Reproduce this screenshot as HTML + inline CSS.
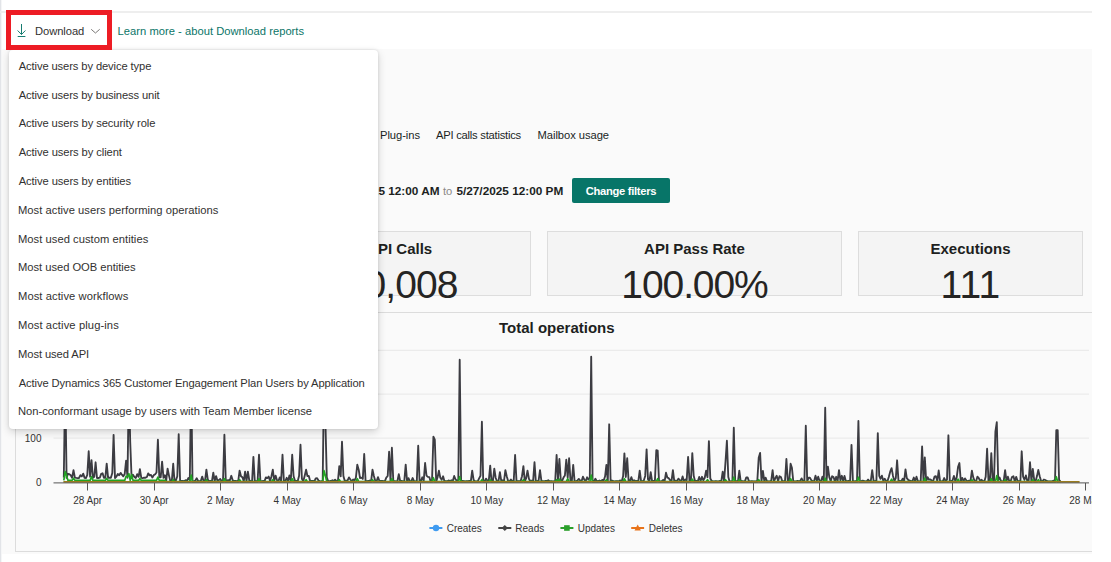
<!DOCTYPE html>
<html lang="en"><head><meta charset="utf-8"><title>Download reports</title>
<style>
html,body{margin:0;padding:0;background:#fff}
body{width:1111px;height:562px;overflow:hidden;position:relative;font-family:"Liberation Sans",sans-serif;font-size:11.2px;color:#323130}
#wrap{position:absolute;left:0;top:0;width:1092px;height:562px;overflow:hidden}
.abs{position:absolute;white-space:nowrap}
#edge{left:0;top:0;width:1px;height:562px;background:#e2e4e8;border-right:1px solid #f5f6f7}
#topline{left:0;top:11px;width:1092px;height:2px;background:#eeeeee}
#bar{left:2px;top:13px;width:1090px;height:36px;background:#fff}
#gray{left:2px;top:49px;width:1090px;height:505px;background:#fafafa}
#red{left:6px;top:10px;width:96px;height:30px;border:5px solid #ed1c24}
#dl{left:35px;top:24px;line-height:14px;letter-spacing:-0.07px;color:#323130}
#lm{left:117.6px;top:24px;line-height:14px;letter-spacing:0.016px;color:#0b7568;text-decoration:none}
.tab{top:128px;line-height:14px;color:#201f1e}
.flt{top:184px;line-height:14px;color:#201f1e}
#btn{left:572px;top:178px;width:98px;height:25px;border-radius:2px;background:#077568;color:#fff;font-weight:700;font-size:11.2px;letter-spacing:-0.3px;text-align:center;line-height:27px}
.card{top:231px;height:63px;background:#f4f4f4;border:1px solid #dddddd;text-align:center}
.card h3{margin:0;font-size:15px;font-weight:700;color:#201f1e;position:absolute;left:0;right:0;top:8px;line-height:18px}
.card p{margin:0;font-size:39px;color:#252423;position:absolute;left:0;right:0;top:30px;line-height:46px}
#chart{left:15px;top:312px;width:1100px;height:238px;border:1px solid #dcdcdc;background:#fafafa}
#ttl{left:499px;top:319px;font-size:15px;font-weight:700;line-height:18px;color:#201f1e}
#menu{left:9px;top:50px;width:369px;height:378.5px;background:#fff;border-radius:4px;box-shadow:0 3px 8px rgba(0,0,0,.16),0 0 3px rgba(0,0,0,.12);margin:0;padding:0;list-style:none}
#menu ul{margin:0;padding:0;list-style:none}
#menu li{position:absolute;left:0;height:29px;line-height:29px;color:#323130;white-space:nowrap}
svg text{font-family:"Liberation Sans",sans-serif;font-size:10px;fill:#333}
</style></head><body>
<div id="wrap">
<div class="abs" id="edge"></div>
<div class="abs" id="topline"></div>
<div class="abs" id="bar"></div>
<div class="abs" id="gray"></div>

<span class="abs tab" style="left:30px">Home</span>
<span class="abs tab" style="left:80px">Active usage</span>
<span class="abs tab" style="left:165px">System jobs</span>
<span class="abs tab" style="left:380px;letter-spacing:-0.05px">Plug-ins</span>
<span class="abs tab" style="left:436px;letter-spacing:-0.227px">API calls statistics</span>
<span class="abs tab" style="left:537.5px;letter-spacing:-0.05px">Mailbox usage</span>

<span class="abs flt" style="right:652.4px;font-weight:700;font-size:11.8px">Filters: 4/27/2025 12:00 AM</span>
<span class="abs flt" style="left:443px;color:#8a8886;letter-spacing:-0.17px">to</span>
<span class="abs flt" style="left:456.4px;font-weight:700;font-size:11.8px">5/27/2025 12:00 PM</span>
<div class="abs" id="btn">Change filters</div>

<div class="abs card" style="left:265px;width:264px"><h3 style="padding-left:3.4px">API Calls</h3><p style="letter-spacing:-0.9px;padding-left:5.2px">10,008</p></div>
<div class="abs card" style="left:547px;width:293px"><h3>API Pass Rate</h3><p style="letter-spacing:-1.1px">100.00%</p></div>
<div class="abs card" style="left:858px;width:223px"><h3>Executions</h3><p style="letter-spacing:0.2px">111</p></div>

<div class="abs" id="chart"></div>
<div class="abs" id="ttl">Total operations</div>
<svg class="abs" style="left:0;top:0" width="1092" height="562" viewBox="0 0 1092 562">
<g stroke="#ebebeb" stroke-width="1.2" fill="none">
<line x1="53.5" y1="350.4" x2="1089" y2="350.4"/><line x1="53.5" y1="394.2" x2="1089" y2="394.2"/><line x1="53.5" y1="438.1" x2="1089" y2="438.1"/>
</g>
<path d="M63.8,477.4 L65.2,381.7 L66.6,477.9 L68.0,473.8 L69.3,474.1 L70.7,475.3 L72.1,477.7 L73.5,470.2 L74.9,477.6 L76.3,477.9 L77.6,478.1 L79.0,478.0 L80.4,475.2 L81.8,476.4 L83.2,473.6 L84.6,477.9 L85.9,478.1 L87.3,474.9 L88.7,451.2 L90.1,476.7 L91.5,460.1 L92.9,477.8 L94.3,476.7 L95.6,462.3 L97.0,478.0 L98.4,478.0 L99.8,477.7 L101.2,473.9 L102.6,473.3 L103.9,477.8 L105.3,477.9 L106.7,463.7 L108.1,477.9 L109.5,477.6 L110.9,477.8 L112.3,473.1 L113.6,434.9 L115.0,478.0 L116.4,476.6 L117.8,474.0 L119.2,475.2 L120.6,472.9 L121.9,474.7 L123.3,476.3 L124.7,474.0 L126.1,460.7 L127.5,477.7 L128.9,381.7 L130.2,441.7 L131.6,478.0 L133.0,474.8 L134.4,476.9 L135.8,478.0 L137.2,474.1 L138.6,476.8 L139.9,469.2 L141.3,477.8 L142.7,478.1 L144.1,477.7 L145.5,477.7 L146.9,477.0 L148.2,473.4 L149.6,475.4 L151.0,475.0 L152.4,477.5 L153.8,475.1 L155.2,474.3 L156.5,472.5 L157.9,439.7 L159.3,477.1 L160.7,477.4 L162.1,461.7 L163.5,477.9 L164.9,475.2 L166.2,480.6 L167.6,468.7 L169.0,475.6 L170.4,481.4 L171.8,481.4 L173.2,463.7 L174.5,481.1 L175.9,480.4 L177.3,476.2 L178.7,434.2 L180.1,480.6 L181.5,481.0 L182.8,481.0 L184.2,481.1 L185.6,480.2 L187.0,480.9 L188.4,478.0 L189.8,479.9 L191.2,381.7 L192.5,481.0 L193.9,481.3 L195.3,480.6 L196.7,478.2 L198.1,481.0 L199.5,481.2 L200.8,481.1 L202.2,476.6 L203.6,481.1 L205.0,481.2 L206.4,469.7 L207.8,479.7 L209.2,481.3 L210.5,481.0 L211.9,481.4 L213.3,472.7 L214.7,481.0 L216.1,476.1 L217.5,481.1 L218.8,480.1 L220.2,478.9 L221.6,481.1 L223.0,481.0 L224.4,434.7 L225.8,481.3 L227.1,480.5 L228.5,480.1 L229.9,480.3 L231.3,475.8 L232.7,480.3 L234.1,481.0 L235.5,481.0 L236.8,481.2 L238.2,481.4 L239.6,470.7 L241.0,476.2 L242.4,477.3 L243.8,481.2 L245.1,471.7 L246.5,481.1 L247.9,471.7 L249.3,480.5 L250.7,481.2 L252.1,481.1 L253.4,456.9 L254.8,481.2 L256.2,481.1 L257.6,481.2 L259.0,454.7 L260.4,481.0 L261.8,481.3 L263.1,481.0 L264.5,481.4 L265.9,477.4 L267.3,478.1 L268.7,476.6 L270.1,481.0 L271.4,476.4 L272.8,469.7 L274.2,481.0 L275.6,475.6 L277.0,480.2 L278.4,481.0 L279.8,477.4 L281.1,481.3 L282.5,454.7 L283.9,481.4 L285.3,481.2 L286.7,477.8 L288.1,481.2 L289.4,475.5 L290.8,481.0 L292.2,454.7 L293.6,476.2 L295.0,480.8 L296.4,481.0 L297.7,481.3 L299.1,475.7 L300.5,444.7 L301.9,478.7 L303.3,481.2 L304.7,475.7 L306.1,469.7 L307.4,476.0 L308.8,475.9 L310.2,481.3 L311.6,481.0 L313.0,480.8 L314.4,481.3 L315.7,478.4 L317.1,478.2 L318.5,480.5 L319.9,481.3 L321.3,481.4 L322.7,480.9 L324.0,381.7 L325.4,421.7 L326.8,477.3 L328.2,481.4 L329.6,481.2 L331.0,481.0 L332.4,480.2 L333.7,481.0 L335.1,479.7 L336.5,481.1 L337.9,481.3 L339.3,466.2 L340.7,476.4 L342.0,441.7 L343.4,476.0 L344.8,481.1 L346.2,480.6 L347.6,480.3 L349.0,477.4 L350.4,479.5 L351.7,481.2 L353.1,479.5 L354.5,480.4 L355.9,477.6 L357.3,464.7 L358.7,469.7 L360.0,478.0 L361.4,477.6 L362.8,478.9 L364.2,454.0 L365.6,481.2 L367.0,481.1 L368.3,481.0 L369.7,480.5 L371.1,481.4 L372.5,469.7 L373.9,476.0 L375.3,481.1 L376.7,481.0 L378.0,477.1 L379.4,481.0 L380.8,481.0 L382.2,481.0 L383.6,481.1 L385.0,480.9 L386.3,477.7 L387.7,476.0 L389.1,451.7 L390.5,481.1 L391.9,447.7 L393.3,481.1 L394.6,481.2 L396.0,481.4 L397.4,481.3 L398.8,474.2 L400.2,481.3 L401.6,481.0 L403.0,481.3 L404.3,481.1 L405.7,464.7 L407.1,481.4 L408.5,478.1 L409.9,481.3 L411.3,481.4 L412.6,478.0 L414.0,481.1 L415.4,481.3 L416.8,481.2 L418.2,445.7 L419.6,481.4 L420.9,481.0 L422.3,477.3 L423.7,481.0 L425.1,463.0 L426.5,475.6 L427.9,476.9 L429.3,477.1 L430.6,481.4 L432.0,481.2 L433.4,436.7 L434.8,439.7 L436.2,481.4 L437.6,477.2 L438.9,470.7 L440.3,477.7 L441.7,479.7 L443.1,476.3 L444.5,481.4 L445.9,481.1 L447.3,481.3 L448.6,480.4 L450.0,481.2 L451.4,480.3 L452.8,480.9 L454.2,476.0 L455.6,479.5 L456.9,480.6 L458.3,481.4 L459.7,359.7 L461.1,481.0 L462.5,481.0 L463.9,481.2 L465.2,481.4 L466.6,481.2 L468.0,481.1 L469.4,480.9 L470.8,481.4 L472.2,470.7 L473.6,479.8 L474.9,481.3 L476.3,481.3 L477.7,481.3 L479.1,478.4 L480.5,475.8 L481.9,421.7 L483.2,481.0 L484.6,481.4 L486.0,478.6 L487.4,480.8 L488.8,480.6 L490.2,465.7 L491.5,481.2 L492.9,481.2 L494.3,468.7 L495.7,478.0 L497.1,481.4 L498.5,481.1 L499.9,472.1 L501.2,480.6 L502.6,480.3 L504.0,481.0 L505.4,470.2 L506.8,476.5 L508.2,481.2 L509.5,481.4 L510.9,479.6 L512.3,481.0 L513.7,481.3 L515.1,455.0 L516.5,481.1 L517.9,481.1 L519.2,481.1 L520.6,481.2 L522.0,476.2 L523.4,466.2 L524.8,481.3 L526.2,478.1 L527.5,470.7 L528.9,478.7 L530.3,481.2 L531.7,480.6 L533.1,481.4 L534.5,462.2 L535.8,481.1 L537.2,481.2 L538.6,480.6 L540.0,470.2 L541.4,480.9 L542.8,481.1 L544.2,481.3 L545.5,481.0 L546.9,480.9 L548.3,480.3 L549.7,481.4 L551.1,481.1 L552.5,481.3 L553.8,481.3 L555.2,481.3 L556.6,455.0 L558.0,479.5 L559.4,459.0 L560.8,480.3 L562.1,481.0 L563.5,477.6 L564.9,475.5 L566.3,459.7 L567.7,477.6 L569.1,458.2 L570.5,481.0 L571.8,481.3 L573.2,464.9 L574.6,481.4 L576.0,481.3 L577.4,480.5 L578.8,478.9 L580.1,480.4 L581.5,481.4 L582.9,476.7 L584.3,479.7 L585.7,481.2 L587.1,477.3 L588.4,479.6 L589.8,477.7 L591.2,356.7 L592.6,481.0 L594.0,481.4 L595.4,478.7 L596.8,481.3 L598.1,481.0 L599.5,480.5 L600.9,481.1 L602.3,479.9 L603.7,480.5 L605.1,476.3 L606.4,464.9 L607.8,481.4 L609.2,424.3 L610.6,481.0 L612.0,480.6 L613.4,481.2 L614.8,481.4 L616.1,481.1 L617.5,481.1 L618.9,481.3 L620.3,480.4 L621.7,481.4 L623.1,476.3 L624.4,453.4 L625.8,477.0 L627.2,458.2 L628.6,481.0 L630.0,480.8 L631.4,477.2 L632.7,481.2 L634.1,480.3 L635.5,481.1 L636.9,481.0 L638.3,481.4 L639.7,470.7 L641.1,481.3 L642.4,481.4 L643.8,480.6 L645.2,475.9 L646.6,449.4 L648.0,479.5 L649.4,481.3 L650.7,472.1 L652.1,481.4 L653.5,481.0 L654.9,481.0 L656.3,450.2 L657.7,450.7 L659.0,481.2 L660.4,481.3 L661.8,481.2 L663.2,479.8 L664.6,481.4 L666.0,472.7 L667.4,477.7 L668.7,478.2 L670.1,480.1 L671.5,481.3 L672.9,470.2 L674.3,481.4 L675.7,480.6 L677.0,481.2 L678.4,478.6 L679.8,480.1 L681.2,481.4 L682.6,476.5 L684.0,481.3 L685.4,479.5 L686.7,480.1 L688.1,456.9 L689.5,481.0 L690.9,480.7 L692.3,453.1 L693.7,475.8 L695.0,481.0 L696.4,481.0 L697.8,481.4 L699.2,477.0 L700.6,481.0 L702.0,476.8 L703.3,480.2 L704.7,478.0 L706.1,470.7 L707.5,477.2 L708.9,441.1 L710.3,478.5 L711.7,481.0 L713.0,481.4 L714.4,481.3 L715.8,481.1 L717.2,481.4 L718.6,481.3 L720.0,481.0 L721.3,481.4 L722.7,471.7 L724.1,481.3 L725.5,461.7 L726.9,440.7 L728.3,477.0 L729.6,481.4 L731.0,481.4 L732.4,481.2 L733.8,427.7 L735.2,481.2 L736.6,481.1 L738.0,481.2 L739.3,470.7 L740.7,481.3 L742.1,481.1 L743.5,481.4 L744.9,481.4 L746.3,477.4 L747.6,477.4 L749.0,481.4 L750.4,481.4 L751.8,481.1 L753.2,481.4 L754.6,481.3 L756.0,481.4 L757.3,481.0 L758.7,457.7 L760.1,452.9 L761.5,481.0 L762.9,471.0 L764.3,481.0 L765.6,477.7 L767.0,481.4 L768.4,481.3 L769.8,481.4 L771.2,481.0 L772.6,470.2 L773.9,481.3 L775.3,478.3 L776.7,475.7 L778.1,481.0 L779.5,476.2 L780.9,477.1 L782.3,481.3 L783.6,481.2 L785.0,481.0 L786.4,459.0 L787.8,481.3 L789.2,481.3 L790.6,463.7 L791.9,467.7 L793.3,481.4 L794.7,481.4 L796.1,481.3 L797.5,481.0 L798.9,481.1 L800.2,480.9 L801.6,478.4 L803.0,481.2 L804.4,481.0 L805.8,425.7 L807.2,481.4 L808.6,477.7 L809.9,477.7 L811.3,480.1 L812.7,481.3 L814.1,481.2 L815.5,475.7 L816.9,480.7 L818.2,476.7 L819.6,481.1 L821.0,481.3 L822.4,476.7 L823.8,481.3 L825.2,407.7 L826.5,481.1 L827.9,466.7 L829.3,477.1 L830.7,481.3 L832.1,476.2 L833.5,477.0 L834.9,481.4 L836.2,476.8 L837.6,481.1 L839.0,470.2 L840.4,480.5 L841.8,475.8 L843.2,481.1 L844.5,476.0 L845.9,481.2 L847.3,481.2 L848.7,480.8 L850.1,480.9 L851.5,444.9 L852.9,481.0 L854.2,481.3 L855.6,481.2 L857.0,481.2 L858.4,420.9 L859.8,481.3 L861.2,481.4 L862.5,480.6 L863.9,481.0 L865.3,481.3 L866.7,481.3 L868.1,479.6 L869.5,481.1 L870.8,481.0 L872.2,470.2 L873.6,481.0 L875.0,481.1 L876.4,481.3 L877.8,433.1 L879.2,475.8 L880.5,478.9 L881.9,475.7 L883.3,480.7 L884.7,478.8 L886.1,481.1 L887.5,481.1 L888.8,476.9 L890.2,471.7 L891.6,468.1 L893.0,475.9 L894.4,481.0 L895.8,478.2 L897.1,460.3 L898.5,481.0 L899.9,481.0 L901.3,481.3 L902.7,478.6 L904.1,481.3 L905.5,469.4 L906.8,478.1 L908.2,479.9 L909.6,480.5 L911.0,481.2 L912.4,481.1 L913.8,477.5 L915.1,481.1 L916.5,476.7 L917.9,481.3 L919.3,481.4 L920.7,481.4 L922.1,446.5 L923.5,481.0 L924.8,457.4 L926.2,481.1 L927.6,477.2 L929.0,479.7 L930.4,479.5 L931.8,480.6 L933.1,481.2 L934.5,476.7 L935.9,476.2 L937.3,481.1 L938.7,470.5 L940.1,481.3 L941.4,481.4 L942.8,481.4 L944.2,478.0 L945.6,481.2 L947.0,479.6 L948.4,435.3 L949.8,481.1 L951.1,481.1 L952.5,480.5 L953.9,476.0 L955.3,481.1 L956.7,477.4 L958.1,466.7 L959.4,463.0 L960.8,481.3 L962.2,477.9 L963.6,481.0 L965.0,478.4 L966.4,480.5 L967.7,481.4 L969.1,480.7 L970.5,481.1 L971.9,470.7 L973.3,477.6 L974.7,481.1 L976.1,481.2 L977.4,476.7 L978.8,478.2 L980.2,480.9 L981.6,479.8 L983.0,481.2 L984.4,481.2 L985.7,476.8 L987.1,448.7 L988.5,481.2 L989.9,481.1 L991.3,453.1 L992.7,481.0 L994.0,481.1 L995.4,431.7 L996.8,422.2 L998.2,480.0 L999.6,477.5 L1001.0,481.1 L1002.4,481.3 L1003.7,481.2 L1005.1,470.2 L1006.5,481.0 L1007.9,476.7 L1009.3,481.3 L1010.7,481.0 L1012.0,477.0 L1013.4,476.2 L1014.8,481.2 L1016.2,476.9 L1017.6,481.1 L1019.0,481.1 L1020.4,481.2 L1021.7,451.3 L1023.1,476.6 L1024.5,479.8 L1025.9,475.5 L1027.3,480.9 L1028.7,480.4 L1030.0,462.2 L1031.4,481.1 L1032.8,468.9 L1034.2,479.8 L1035.6,481.2 L1037.0,476.1 L1038.3,470.0 L1039.7,476.2 L1041.1,481.1 L1042.5,481.2 L1043.9,479.5 L1045.3,480.0 L1046.7,481.0 L1048.0,481.3 L1049.4,481.4 L1050.8,481.3 L1052.2,481.3 L1053.6,480.6 L1055.0,481.4 L1056.3,430.2 L1057.7,430.2 L1059.1,480.2 L1060.5,481.1" fill="none" stroke="#3c3c42" stroke-width="1.85" stroke-linejoin="round"/>
<path d="M63.8,480.4 L65.2,471.7 L66.6,475.7 L68.0,480.4 L69.3,480.4 L70.7,480.4 L72.1,480.4 L73.5,478.2 L74.9,480.4 L76.3,480.4 L77.6,480.4 L79.0,480.4 L80.4,480.4 L81.8,480.4 L83.2,480.4 L84.6,480.4 L85.9,480.4 L87.3,480.4 L88.7,480.4 L90.1,480.4 L91.5,476.7 L92.9,480.4 L94.3,480.4 L95.6,480.4 L97.0,480.4 L98.4,480.4 L99.8,480.4 L101.2,480.4 L102.6,480.4 L103.9,480.4 L105.3,480.4 L106.7,478.5 L108.1,480.4 L109.5,480.4 L110.9,480.4 L112.3,480.4 L113.6,480.4 L115.0,480.4 L116.4,480.4 L117.8,480.4 L119.2,480.4 L120.6,480.4 L121.9,480.4 L123.3,480.4 L124.7,480.4 L126.1,476.2 L127.5,476.7 L128.9,473.7 L130.2,480.4 L131.6,474.7 L133.0,480.4 L134.4,480.4 L135.8,480.4 L137.2,480.4 L138.6,480.4 L139.9,478.5 L141.3,480.4 L142.7,480.4 L144.1,480.4 L145.5,480.4 L146.9,480.4 L148.2,480.4 L149.6,480.4 L151.0,480.4 L152.4,480.4 L153.8,480.4 L155.2,480.4 L156.5,480.4 L157.9,477.2 L159.3,480.4 L160.7,480.4 L162.1,480.4 L163.5,480.4 L164.9,480.4 L166.2,481.7 L167.6,481.7 L169.0,481.7 L170.4,481.7 L171.8,481.7 L173.2,479.7 L174.5,481.7 L175.9,481.7 L177.3,481.7 L178.7,481.7 L180.1,481.7 L181.5,481.7 L182.8,481.7 L184.2,481.7 L185.6,481.7 L187.0,481.7 L188.4,481.7 L189.8,481.7 L191.2,475.2 L192.5,481.7 L193.9,481.7 L195.3,481.7 L196.7,481.7 L198.1,481.7 L199.5,481.7 L200.8,481.7 L202.2,481.7 L203.6,481.7 L205.0,481.7 L206.4,479.7 L207.8,481.7 L209.2,481.7 L210.5,481.7 L211.9,481.7 L213.3,481.7 L214.7,481.7 L216.1,481.7 L217.5,481.7 L218.8,481.7 L220.2,481.7 L221.6,481.7 L223.0,481.7 L224.4,478.7 L225.8,481.7 L227.1,481.7 L228.5,481.7 L229.9,481.7 L231.3,481.7 L232.7,481.7 L234.1,481.7 L235.5,481.7 L236.8,481.7 L238.2,481.7 L239.6,479.7 L241.0,481.7 L242.4,481.7 L243.8,481.7 L245.1,481.7 L246.5,481.7 L247.9,481.7 L249.3,481.7 L250.7,481.7 L252.1,481.7 L253.4,481.7 L254.8,481.7 L256.2,481.7 L257.6,481.7 L259.0,478.7 L260.4,481.7 L261.8,481.7 L263.1,481.7 L264.5,481.7 L265.9,481.7 L267.3,481.7 L268.7,481.7 L270.1,481.7 L271.4,481.7 L272.8,479.7 L274.2,481.7 L275.6,481.7 L277.0,481.7 L278.4,481.7 L279.8,481.7 L281.1,481.7 L282.5,481.7 L283.9,481.7 L285.3,481.7 L286.7,481.7 L288.1,481.7 L289.4,481.7 L290.8,481.7 L292.2,478.7 L293.6,481.7 L295.0,481.7 L296.4,481.7 L297.7,481.7 L299.1,481.7 L300.5,481.7 L301.9,481.7 L303.3,481.7 L304.7,481.7 L306.1,479.7 L307.4,481.7 L308.8,481.7 L310.2,481.7 L311.6,481.7 L313.0,481.7 L314.4,481.7 L315.7,481.7 L317.1,481.7 L318.5,481.7 L319.9,481.7 L321.3,481.7 L322.7,481.7 L324.0,470.7 L325.4,475.7 L326.8,481.7 L328.2,481.7 L329.6,481.7 L331.0,481.7 L332.4,481.7 L333.7,481.7 L335.1,481.7 L336.5,481.7 L337.9,481.7 L339.3,479.7 L340.7,481.7 L342.0,481.7 L343.4,481.7 L344.8,481.7 L346.2,481.7 L347.6,481.7 L349.0,481.7 L350.4,481.7 L351.7,481.7 L353.1,481.7 L354.5,481.7 L355.9,481.7 L357.3,478.7 L358.7,481.7 L360.0,481.7 L361.4,481.7 L362.8,481.7 L364.2,481.7 L365.6,481.7 L367.0,481.7 L368.3,481.7 L369.7,481.7 L371.1,481.7 L372.5,479.7 L373.9,481.7 L375.3,481.7 L376.7,481.7 L378.0,481.7 L379.4,481.7 L380.8,481.7 L382.2,481.7 L383.6,481.7 L385.0,481.7 L386.3,481.7 L387.7,481.7 L389.1,481.7 L390.5,481.7 L391.9,478.7 L393.3,481.7 L394.6,481.7 L396.0,481.7 L397.4,481.7 L398.8,481.7 L400.2,481.7 L401.6,481.7 L403.0,481.7 L404.3,481.7 L405.7,481.7 L407.1,481.7 L408.5,481.7 L409.9,481.7 L411.3,481.7 L412.6,481.7 L414.0,481.7 L415.4,481.7 L416.8,481.7 L418.2,481.7 L419.6,481.7 L420.9,481.7 L422.3,481.7 L423.7,481.7 L425.1,481.7 L426.5,481.7 L427.9,481.7 L429.3,481.7 L430.6,481.7 L432.0,481.7 L433.4,477.7 L434.8,481.7 L436.2,481.7 L437.6,481.7 L438.9,481.7 L440.3,481.7 L441.7,481.7 L443.1,481.7 L444.5,481.7 L445.9,481.7 L447.3,481.7 L448.6,481.7 L450.0,481.7 L451.4,481.7 L452.8,481.7 L454.2,481.7 L455.6,481.7 L456.9,481.7 L458.3,481.7 L459.7,476.7 L461.1,481.7 L462.5,481.7 L463.9,481.7 L465.2,481.7 L466.6,481.7 L468.0,481.7 L469.4,481.7 L470.8,481.7 L472.2,481.7 L473.6,481.7 L474.9,481.7 L476.3,481.7 L477.7,481.7 L479.1,481.7 L480.5,481.7 L481.9,479.7 L483.2,481.7 L484.6,481.7 L486.0,481.7 L487.4,481.7 L488.8,481.7 L490.2,479.7 L491.5,481.7 L492.9,481.7 L494.3,481.7 L495.7,481.7 L497.1,481.7 L498.5,481.7 L499.9,481.7 L501.2,481.7 L502.6,481.7 L504.0,481.7 L505.4,481.7 L506.8,481.7 L508.2,481.7 L509.5,481.7 L510.9,481.7 L512.3,481.7 L513.7,481.7 L515.1,481.7 L516.5,481.7 L517.9,481.7 L519.2,481.7 L520.6,481.7 L522.0,481.7 L523.4,479.7 L524.8,481.7 L526.2,481.7 L527.5,481.7 L528.9,481.7 L530.3,481.7 L531.7,481.7 L533.1,481.7 L534.5,481.7 L535.8,481.7 L537.2,481.7 L538.6,481.7 L540.0,481.7 L541.4,481.7 L542.8,481.7 L544.2,481.7 L545.5,481.7 L546.9,481.7 L548.3,481.7 L549.7,481.7 L551.1,481.7 L552.5,481.7 L553.8,481.7 L555.2,481.7 L556.6,479.7 L558.0,481.7 L559.4,479.2 L560.8,481.7 L562.1,481.7 L563.5,481.7 L564.9,481.7 L566.3,481.7 L567.7,478.7 L569.1,481.7 L570.5,481.7 L571.8,481.7 L573.2,481.7 L574.6,481.7 L576.0,481.7 L577.4,481.7 L578.8,481.7 L580.1,481.7 L581.5,481.7 L582.9,481.7 L584.3,481.7 L585.7,481.7 L587.1,481.7 L588.4,481.7 L589.8,481.7 L591.2,475.2 L592.6,481.7 L594.0,481.7 L595.4,481.7 L596.8,481.7 L598.1,481.7 L599.5,481.7 L600.9,481.7 L602.3,481.7 L603.7,481.7 L605.1,481.7 L606.4,479.7 L607.8,481.7 L609.2,481.7 L610.6,481.7 L612.0,481.7 L613.4,481.7 L614.8,481.7 L616.1,481.7 L617.5,481.7 L618.9,481.7 L620.3,481.7 L621.7,481.7 L623.1,481.7 L624.4,478.7 L625.8,481.7 L627.2,481.7 L628.6,481.7 L630.0,481.7 L631.4,481.7 L632.7,481.7 L634.1,481.7 L635.5,481.7 L636.9,481.7 L638.3,481.7 L639.7,481.7 L641.1,481.7 L642.4,481.7 L643.8,481.7 L645.2,481.7 L646.6,481.7 L648.0,481.7 L649.4,481.7 L650.7,481.7 L652.1,481.7 L653.5,481.7 L654.9,481.7 L656.3,481.7 L657.7,478.7 L659.0,481.7 L660.4,481.7 L661.8,481.7 L663.2,481.7 L664.6,481.7 L666.0,481.7 L667.4,481.7 L668.7,481.7 L670.1,481.7 L671.5,481.7 L672.9,481.7 L674.3,481.7 L675.7,481.7 L677.0,481.7 L678.4,481.7 L679.8,481.7 L681.2,481.7 L682.6,481.7 L684.0,481.7 L685.4,481.7 L686.7,481.7 L688.1,481.7 L689.5,481.7 L690.9,481.7 L692.3,479.2 L693.7,481.7 L695.0,481.7 L696.4,481.7 L697.8,481.7 L699.2,481.7 L700.6,481.7 L702.0,481.7 L703.3,481.7 L704.7,481.7 L706.1,481.7 L707.5,479.7 L708.9,481.7 L710.3,481.7 L711.7,481.7 L713.0,481.7 L714.4,481.7 L715.8,481.7 L717.2,481.7 L718.6,481.7 L720.0,481.7 L721.3,481.7 L722.7,481.7 L724.1,481.7 L725.5,479.7 L726.9,481.7 L728.3,481.7 L729.6,481.7 L731.0,481.7 L732.4,481.7 L733.8,477.2 L735.2,481.7 L736.6,481.7 L738.0,481.7 L739.3,479.7 L740.7,481.7 L742.1,481.7 L743.5,481.7 L744.9,481.7 L746.3,481.7 L747.6,481.7 L749.0,481.7 L750.4,481.7 L751.8,481.7 L753.2,481.7 L754.6,481.7 L756.0,481.7 L757.3,481.7 L758.7,479.7 L760.1,481.7 L761.5,481.7 L762.9,481.7 L764.3,481.7 L765.6,481.7 L767.0,481.7 L768.4,481.7 L769.8,481.7 L771.2,481.7 L772.6,481.7 L773.9,481.7 L775.3,481.7 L776.7,481.7 L778.1,481.7 L779.5,481.7 L780.9,481.7 L782.3,481.7 L783.6,481.7 L785.0,481.7 L786.4,481.7 L787.8,481.7 L789.2,481.7 L790.6,478.7 L791.9,481.7 L793.3,481.7 L794.7,481.7 L796.1,481.7 L797.5,481.7 L798.9,481.7 L800.2,481.7 L801.6,481.7 L803.0,481.7 L804.4,481.7 L805.8,481.7 L807.2,481.7 L808.6,481.7 L809.9,481.7 L811.3,481.7 L812.7,481.7 L814.1,481.7 L815.5,481.7 L816.9,481.7 L818.2,481.7 L819.6,481.7 L821.0,481.7 L822.4,481.7 L823.8,481.7 L825.2,478.2 L826.5,481.7 L827.9,481.7 L829.3,481.7 L830.7,481.7 L832.1,481.7 L833.5,481.7 L834.9,481.7 L836.2,481.7 L837.6,481.7 L839.0,481.7 L840.4,481.7 L841.8,481.7 L843.2,481.7 L844.5,481.7 L845.9,481.7 L847.3,481.7 L848.7,481.7 L850.1,481.7 L851.5,481.7 L852.9,481.7 L854.2,481.7 L855.6,481.7 L857.0,481.7 L858.4,477.2 L859.8,481.7 L861.2,481.7 L862.5,481.7 L863.9,481.7 L865.3,481.7 L866.7,481.7 L868.1,481.7 L869.5,481.7 L870.8,481.7 L872.2,481.7 L873.6,481.7 L875.0,481.7 L876.4,481.7 L877.8,481.7 L879.2,481.7 L880.5,481.7 L881.9,481.7 L883.3,481.7 L884.7,481.7 L886.1,481.7 L887.5,481.7 L888.8,481.7 L890.2,481.7 L891.6,479.2 L893.0,481.7 L894.4,481.7 L895.8,481.7 L897.1,481.7 L898.5,481.7 L899.9,481.7 L901.3,481.7 L902.7,481.7 L904.1,481.7 L905.5,481.7 L906.8,481.7 L908.2,481.7 L909.6,481.7 L911.0,481.7 L912.4,481.7 L913.8,481.7 L915.1,481.7 L916.5,481.7 L917.9,481.7 L919.3,481.7 L920.7,481.7 L922.1,481.7 L923.5,481.7 L924.8,478.2 L926.2,481.7 L927.6,481.7 L929.0,481.7 L930.4,481.7 L931.8,481.7 L933.1,481.7 L934.5,481.7 L935.9,481.7 L937.3,481.7 L938.7,481.7 L940.1,481.7 L941.4,481.7 L942.8,481.7 L944.2,481.7 L945.6,481.7 L947.0,481.7 L948.4,481.7 L949.8,481.7 L951.1,481.7 L952.5,481.7 L953.9,481.7 L955.3,481.7 L956.7,481.7 L958.1,479.2 L959.4,481.7 L960.8,481.7 L962.2,481.7 L963.6,481.7 L965.0,481.7 L966.4,481.7 L967.7,481.7 L969.1,481.7 L970.5,481.7 L971.9,479.7 L973.3,481.7 L974.7,481.7 L976.1,481.7 L977.4,481.7 L978.8,481.7 L980.2,481.7 L981.6,481.7 L983.0,481.7 L984.4,481.7 L985.7,481.7 L987.1,481.7 L988.5,481.7 L989.9,481.7 L991.3,478.7 L992.7,481.7 L994.0,481.7 L995.4,481.7 L996.8,475.7 L998.2,481.7 L999.6,481.7 L1001.0,481.7 L1002.4,481.7 L1003.7,481.7 L1005.1,479.7 L1006.5,481.7 L1007.9,481.7 L1009.3,481.7 L1010.7,481.7 L1012.0,481.7 L1013.4,481.7 L1014.8,481.7 L1016.2,481.7 L1017.6,481.7 L1019.0,481.7 L1020.4,481.7 L1021.7,481.7 L1023.1,481.7 L1024.5,481.7 L1025.9,481.7 L1027.3,481.7 L1028.7,481.7 L1030.0,481.7 L1031.4,481.7 L1032.8,479.7 L1034.2,481.7 L1035.6,481.7 L1037.0,481.7 L1038.3,479.7 L1039.7,481.7 L1041.1,481.7 L1042.5,481.7 L1043.9,481.7 L1045.3,481.7 L1046.7,481.7 L1048.0,481.7 L1049.4,481.7 L1050.8,481.7 L1052.2,481.7 L1053.6,481.7 L1055.0,481.7 L1056.3,476.7 L1057.7,481.7 L1059.1,481.7 L1060.5,481.7" fill="none" stroke="#22a322" stroke-width="1.7" stroke-linejoin="round"/>
<line x1="63.4" y1="481.8" x2="1079.6" y2="481.8" stroke="#9a7c1e" stroke-width="1.8"/>
<g stroke="#555" stroke-width="1" fill="none">
<line x1="53.5" y1="482.9" x2="1089" y2="482.9"/><line x1="87.5" y1="483" x2="87.5" y2="490.5"/><line x1="154.5" y1="483" x2="154.5" y2="490.5"/><line x1="220.5" y1="483" x2="220.5" y2="490.5"/><line x1="287.5" y1="483" x2="287.5" y2="490.5"/><line x1="353.5" y1="483" x2="353.5" y2="490.5"/><line x1="420.5" y1="483" x2="420.5" y2="490.5"/><line x1="486.5" y1="483" x2="486.5" y2="490.5"/><line x1="553.5" y1="483" x2="553.5" y2="490.5"/><line x1="619.5" y1="483" x2="619.5" y2="490.5"/><line x1="686.5" y1="483" x2="686.5" y2="490.5"/><line x1="753.5" y1="483" x2="753.5" y2="490.5"/><line x1="819.5" y1="483" x2="819.5" y2="490.5"/><line x1="886.5" y1="483" x2="886.5" y2="490.5"/><line x1="952.5" y1="483" x2="952.5" y2="490.5"/><line x1="1019.5" y1="483" x2="1019.5" y2="490.5"/><line x1="1085.5" y1="483" x2="1085.5" y2="490.5"/>
</g>
<g text-anchor="middle"><text x="87.6" y="504">28 Apr</text><text x="154.1" y="504">30 Apr</text><text x="220.7" y="504">2 May</text><text x="287.2" y="504">4 May</text><text x="353.8" y="504">6 May</text><text x="420.3" y="504">8 May</text><text x="486.8" y="504">10 May</text><text x="553.4" y="504">12 May</text><text x="619.9" y="504">14 May</text><text x="686.5" y="504">16 May</text><text x="753.0" y="504">18 May</text><text x="819.5" y="504">20 May</text><text x="886.1" y="504">22 May</text><text x="952.6" y="504">24 May</text><text x="1019.2" y="504">26 May</text><text x="1085.7" y="504">28 May</text></g>
<g text-anchor="end"><text x="41.5" y="442.4">100</text><text x="41.5" y="486.4">0</text><text x="41.5" y="398">200</text><text x="41.5" y="354">300</text></g>
<g>
<line x1="429.4" y1="528" x2="442.4" y2="528" stroke="#3f9bf0" stroke-width="2"/><circle cx="436" cy="528" r="3.2" fill="#3f9bf0"/>
<text x="446.7" y="531.5">Creates</text>
<line x1="498.3" y1="528" x2="511.3" y2="528" stroke="#444" stroke-width="2"/><path d="M504.8 524.9l3.1 3.1l-3.1 3.1l-3.1-3.1z" fill="#444"/>
<text x="515.3" y="531.5">Reads</text>
<line x1="560.4" y1="528" x2="573.4" y2="528" stroke="#2ca02c" stroke-width="2"/><rect x="564.1" y="525.2" width="5.6" height="5.6" fill="#2ca02c"/>
<text x="577.7" y="531.5">Updates</text>
<line x1="631.2" y1="528" x2="644.1" y2="528" stroke="#e8731a" stroke-width="2"/><path d="M637.7 524.6l3.2 5.8h-6.4z" fill="#e8731a"/>
<text x="648.7" y="531.5">Deletes</text>
</g>
</svg>

<svg class="abs" style="left:16px;top:22px" width="12" height="16" viewBox="0 0 12 16"><path d="M5.5 2v10.4M1.6 8.5l3.9 4l3.9-4M1.7 14.5h7.7" fill="none" stroke="#0b7568" stroke-width="0.95"/></svg>
<span class="abs" id="dl">Download</span>
<svg class="abs" style="left:90px;top:27px" width="11" height="8" viewBox="0 0 11 8"><path d="M1.2 2.3l4.25 3.7l4.25-3.7" fill="none" stroke="#6b6967" stroke-width="0.9"/></svg>
<a class="abs" id="lm">Learn more - about Download reports</a>

<div class="abs" id="menu"><ul>
<li style="top:2px;letter-spacing:-0.110px;padding-left:9.7px">Active users by device type</li>
<li style="top:31px;letter-spacing:-0.116px;padding-left:9.7px">Active users by business unit</li>
<li style="top:59px;letter-spacing:-0.092px;padding-left:9.7px">Active users by security role</li>
<li style="top:88px;letter-spacing:-0.086px;padding-left:9.7px">Active users by client</li>
<li style="top:117px;letter-spacing:-0.088px;padding-left:9.7px">Active users by entities</li>
<li style="top:146px;letter-spacing:0.036px;padding-left:9.0px">Most active users performing operations</li>
<li style="top:175px;letter-spacing:0.038px;padding-left:9.0px">Most used custom entities</li>
<li style="top:203px;letter-spacing:-0.030px;padding-left:9.0px">Most used OOB entities</li>
<li style="top:232px;letter-spacing:0.072px;padding-left:9.0px">Most active workflows</li>
<li style="top:261px;letter-spacing:0.101px;padding-left:9.0px">Most active plug-ins</li>
<li style="top:290px;letter-spacing:-0.080px;padding-left:9.0px">Most used API</li>
<li style="top:319px;letter-spacing:-0.101px;padding-left:9.7px">Active Dynamics 365 Customer Engagement Plan Users by Application</li>
<li style="top:347px;letter-spacing:-0.010px;padding-left:9.0px">Non-conformant usage by users with Team Member license</li>
</ul></div>
<div class="abs" id="red"></div>
</div>
</body></html>
